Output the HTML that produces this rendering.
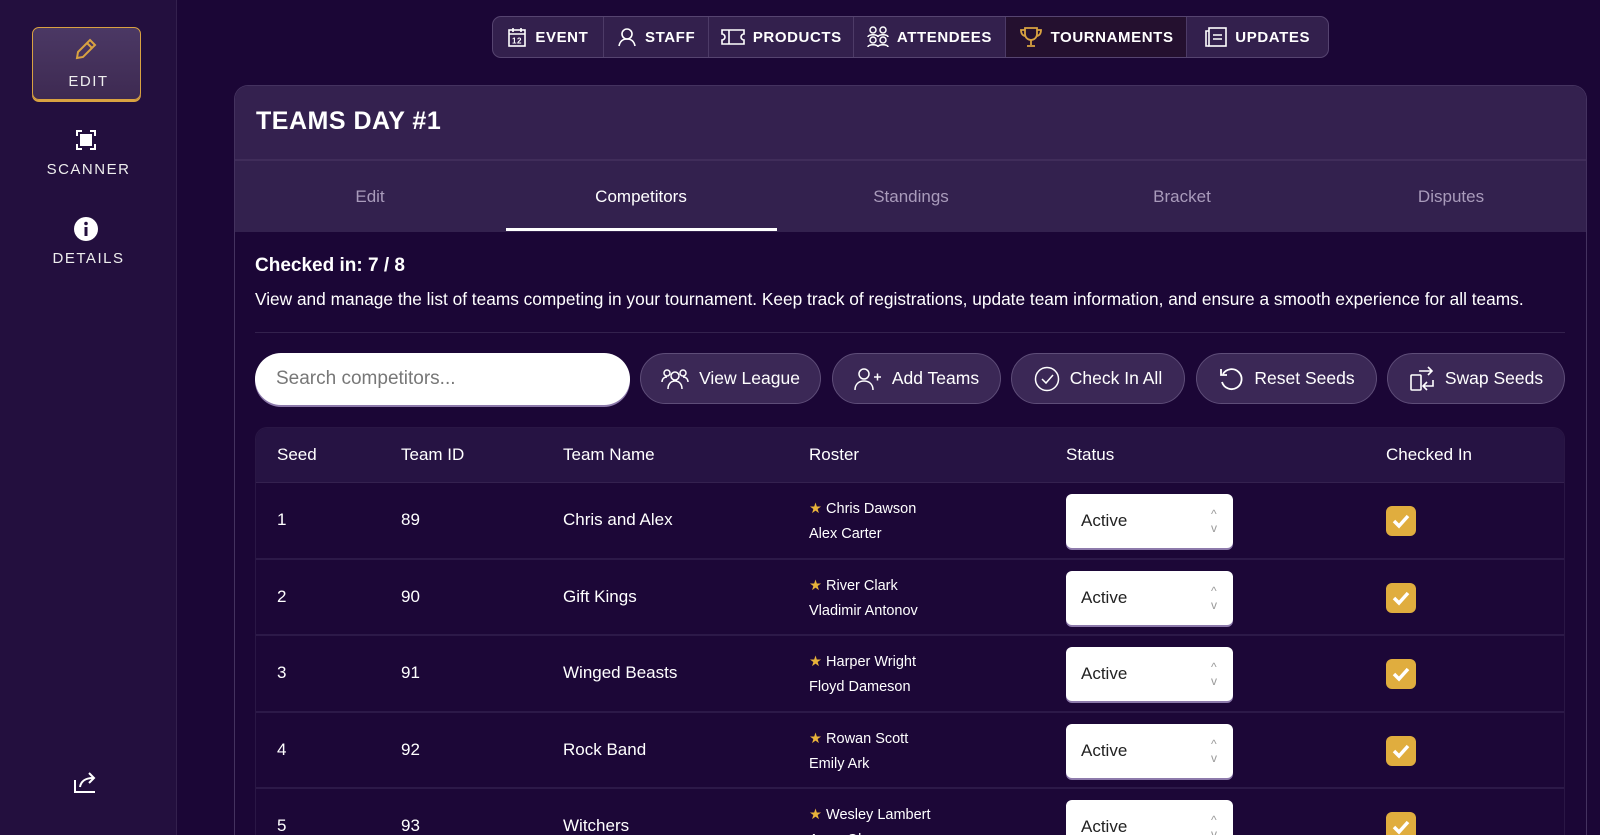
<!DOCTYPE html>
<html style="width:1600px;height:835px;overflow:hidden"><head><meta charset="utf-8"><style>
*{box-sizing:border-box;margin:0;padding:0}
body{width:1600px;height:835px;overflow:hidden;background:#1b0636;font-family:"Liberation Sans",sans-serif;color:#fff;position:relative}
.abs{position:absolute}
.side{left:0;top:0;width:177px;height:835px;background:#230f3e;border-right:1px solid #33204d}
.sitem{position:absolute;left:0;width:177px;text-align:center;font-size:15px;letter-spacing:1.5px;color:#eee}
.edit{left:32px;top:27px;width:109px;height:73px;border:1.5px solid #d9a241;border-radius:7px;background:linear-gradient(#4b3864,#3e2a52);box-shadow:0 2px 0 #d9a241}
.nav{left:492px;top:16px;width:837px;height:42px;border:1px solid #564470;border-radius:9px;background:#33204d;display:flex;overflow:hidden}
.nav div{display:flex;align-items:center;justify-content:center;gap:8px;font-weight:bold;font-size:15px;letter-spacing:.6px;border-right:1px solid #4d3b67;height:100%}
.card{left:234px;top:85px;width:1353px;height:750px;border:1px solid #44325f;border-bottom:none;border-radius:14px 14px 0 0;background:#1b0636;overflow:hidden}
.head{height:75px;background:#34214f;border-bottom:2px solid #402d5a}
.tabs{height:71px;background:#33214e;position:relative}
.tab{position:absolute;top:0;height:71px;line-height:71px;font-size:17px;color:#a99bbb;transform:translateX(-50%)}
.btn{position:absolute;top:353px;height:51px;border:1.5px solid #5e4d78;border-radius:26px;background:#3b2856;display:flex;align-items:center;justify-content:center;gap:10px;font-size:17.5px}
.tbl{left:255px;top:427px;width:1310px;height:408px;background:#1c0737;border-radius:12px 12px 0 0;overflow:hidden;border:1px solid #2a1745;border-bottom:none}
.th{height:55px;background:#261343;border-bottom:1px solid #34214f;position:relative}
.row{height:76.5px;position:relative;border-bottom:2px solid #2c1948}
.c{position:absolute;top:50%;transform:translateY(-50%);font-size:17px}
.sel{position:absolute;left:810px;top:11px;width:167px;height:54px;background:#fff;border-radius:6px;color:#222;font-size:17px;line-height:54px;padding-left:15px;box-shadow:0 2px 0 #8d7aab}
.ck{position:absolute;left:1130px;top:23px;width:30px;height:30px;border-radius:6px;background:#e0ad3e}
.ros{position:absolute;left:553px;top:14px;font-size:14.5px;line-height:25px}
</style></head><body>
<div class="abs side">
 <div class="abs edit"></div>
 <svg class="abs" style="left:74px;top:37px" width="24" height="24" viewBox="0 0 24 24" fill="none" stroke="#d9a241" stroke-width="2"><path d="M16 3l5 5L9 20l-6 1 1-6z"/><path d="M13 6l5 5"/></svg>
 <div class="sitem" style="top:73px">EDIT</div>
 <svg class="abs" style="left:74px;top:128px" width="24" height="24" viewBox="0 0 24 24" fill="none" stroke="#fff" stroke-width="2"><path d="M3 8V3h5M16 3h5v5M21 16v5h-5M8 21H3v-5"/><rect x="7" y="7" width="10" height="10" fill="#fff"/></svg>
 <div class="sitem" style="top:161px">SCANNER</div>
 <svg class="abs" style="left:73px;top:216px" width="26" height="26" viewBox="0 0 26 26"><circle cx="13" cy="13" r="12" fill="#fff"/><rect x="11.5" y="11" width="3" height="9" fill="#230f3e"/><circle cx="13" cy="7.5" r="1.8" fill="#230f3e"/></svg>
 <div class="sitem" style="top:250px">DETAILS</div>
 <svg class="abs" style="left:73px;top:770px" width="26" height="24" viewBox="0 0 26 24" fill="none" stroke="#fff" stroke-width="2"><path d="M2 10v12h20"/><path d="M7 17c1-6 6-9 13-9"/><path d="M16 3l5 5-5 5"/></svg>
</div>
<div class="abs nav">
 <div style="width:111px"><svg width="20" height="20" viewBox="0 0 20 20" fill="none" stroke="#fff" stroke-width="1.6"><rect x="2" y="3" width="16" height="16"/><path d="M2 7h16M6 1v4M14 1v4"/><text x="10" y="16.5" font-size="8" fill="#fff" stroke="none" text-anchor="middle" font-family="Liberation Sans">12</text></svg>EVENT</div>
 <div style="width:106px"><svg width="20" height="20" viewBox="0 0 20 20" fill="none" stroke="#fff" stroke-width="1.6"><circle cx="10" cy="7" r="5"/><path d="M2 19c1-5 4-7 8-7s7 2 8 7"/></svg>STAFF</div>
 <div style="width:145px"><svg width="24" height="18" viewBox="0 0 24 18" fill="none" stroke="#fff" stroke-width="1.6"><path d="M1 2h22v4a3 3 0 000 6v4H1v-4a3 3 0 000-6z"/><path d="M8 2v14"/></svg>PRODUCTS</div>
 <div style="width:152px"><svg width="22" height="22" viewBox="0 0 22 22" fill="none" stroke="#fff" stroke-width="1.5"><circle cx="6" cy="4" r="3"/><circle cx="16" cy="4" r="3"/><circle cx="6" cy="14" r="3"/><circle cx="16" cy="14" r="3"/><path d="M1 11c0-3 10-3 10 0M11 11c0-3 10-3 10 0M1 21c0-3 10-3 10 0M11 21c0-3 10-3 10 0"/></svg>ATTENDEES</div>
 <div style="width:182px;background:#24102f"><svg width="24" height="24" viewBox="0 0 24 24" fill="none" stroke="#d9a241" stroke-width="1.8"><path d="M6 3h12v6a6 6 0 01-12 0z"/><path d="M6 5H2c0 4 2 6 5 6M18 5h4c0 4-2 6-5 6M12 15v5M8 21h8"/></svg>TOURNAMENTS</div>
 <div style="width:141px;border:none"><svg width="22" height="20" viewBox="0 0 22 20" fill="none" stroke="#fff" stroke-width="1.6"><rect x="4" y="1" width="17" height="18"/><path d="M4 4H1v15h3M8 8h9M8 12h9"/></svg>UPDATES</div>
</div>
<div class="abs card">
 <div class="head"><div style="position:absolute;left:21px;top:21px;font-size:25px;font-weight:900;letter-spacing:.5px">TEAMS DAY #1</div></div>
 <div class="tabs">
  <div class="tab" style="left:135px">Edit</div>
  <div class="tab" style="left:406px;color:#fff">Competitors</div>
  <div class="tab" style="left:676px">Standings</div>
  <div class="tab" style="left:947px">Bracket</div>
  <div class="tab" style="left:1216px">Disputes</div>
  <div style="position:absolute;left:271px;top:67px;width:271px;height:3px;background:#fff"></div>
 </div>
</div>
<div class="abs" style="left:255px;top:255px;font-size:19px;font-weight:bold">Checked in: 7 / 8</div>
<div class="abs" style="left:255px;top:289px;font-size:17.3px;white-space:nowrap">View and manage the list of teams competing in your tournament. Keep track of registrations, update team information, and ensure a smooth experience for all teams.</div>
<div class="abs" style="left:255px;top:332px;width:1310px;height:1px;background:#33214d"></div>
<div class="abs" style="left:255px;top:353px;width:375px;height:52px;background:#fff;border-radius:26px;color:#777;font-size:19px;line-height:52px;padding-left:21px;box-shadow:0 2px 0 #8d7aab">Search competitors...</div>
<div class="btn" style="left:640px;width:181px"><svg width="28" height="22" viewBox="0 0 28 22" fill="none" stroke="#fff" stroke-width="1.5"><circle cx="14" cy="8" r="4"/><circle cx="6" cy="5" r="3"/><circle cx="22" cy="5" r="3"/><path d="M7 21c0-5 3-8 7-8s7 3 7 8M1 14c0-3 2-5 5-5M27 14c0-3-2-5-5-5"/></svg>View League</div>
<div class="btn" style="left:832px;width:169px"><svg width="28" height="24" viewBox="0 0 28 24" fill="none" stroke="#fff" stroke-width="1.5"><circle cx="10" cy="7" r="5"/><path d="M1 23c0-6 4-9 9-9s9 3 9 9M20 10h7M23.5 6.5v7"/></svg>Add Teams</div>
<div class="btn" style="left:1011px;width:174px"><svg width="26" height="26" viewBox="0 0 26 26" fill="none" stroke="#fff" stroke-width="1.5"><circle cx="13" cy="13" r="11.5"/><path d="M8 13l4 4 7-8"/></svg>Check In All</div>
<div class="btn" style="left:1196px;width:181px"><svg width="26" height="26" viewBox="0 0 26 26" fill="none" stroke="#fff" stroke-width="1.8"><path d="M5 8a10 10 0 11-1 8"/><path d="M3 3v6h6"/></svg>Reset Seeds</div>
<div class="btn" style="left:1387px;width:178px"><svg width="26" height="26" viewBox="0 0 26 26" fill="none" stroke="#fff" stroke-width="1.6"><rect x="2" y="9" width="10" height="15" rx="1"/><path d="M10 5h13M19 1l4 4-4 4M24 14v6H14M18 16l-4 4 4 4"/></svg>Swap Seeds</div>
<div class="abs tbl">
 <div class="th">
  <div class="c" style="left:21px">Seed</div><div class="c" style="left:145px">Team ID</div><div class="c" style="left:307px">Team Name</div><div class="c" style="left:553px">Roster</div><div class="c" style="left:810px">Status</div><div class="c" style="left:1130px">Checked In</div>
 </div>
 <div class="row"><div class="c" style="left:21px">1</div><div class="c" style="left:145px">89</div><div class="c" style="left:307px">Chris and Alex</div><div class="ros"><span style="color:#e8b23a">★</span> Chris Dawson<br>Alex Carter</div><div class="sel">Active<span style="position:absolute;right:16px;top:0;color:#999;font-size:12px;line-height:14px;padding-top:13px">^<br>v</span></div><div class="ck"><svg width="30" height="30" viewBox="0 0 30 30"><path d="M8 15l5 5 9-10" fill="none" stroke="#fff" stroke-width="3.5"/></svg></div></div>
 <div class="row"><div class="c" style="left:21px">2</div><div class="c" style="left:145px">90</div><div class="c" style="left:307px">Gift Kings</div><div class="ros"><span style="color:#e8b23a">★</span> River Clark<br>Vladimir Antonov</div><div class="sel">Active<span style="position:absolute;right:16px;top:0;color:#999;font-size:12px;line-height:14px;padding-top:13px">^<br>v</span></div><div class="ck"><svg width="30" height="30" viewBox="0 0 30 30"><path d="M8 15l5 5 9-10" fill="none" stroke="#fff" stroke-width="3.5"/></svg></div></div>
 <div class="row"><div class="c" style="left:21px">3</div><div class="c" style="left:145px">91</div><div class="c" style="left:307px">Winged Beasts</div><div class="ros"><span style="color:#e8b23a">★</span> Harper Wright<br>Floyd Dameson</div><div class="sel">Active<span style="position:absolute;right:16px;top:0;color:#999;font-size:12px;line-height:14px;padding-top:13px">^<br>v</span></div><div class="ck"><svg width="30" height="30" viewBox="0 0 30 30"><path d="M8 15l5 5 9-10" fill="none" stroke="#fff" stroke-width="3.5"/></svg></div></div>
 <div class="row"><div class="c" style="left:21px">4</div><div class="c" style="left:145px">92</div><div class="c" style="left:307px">Rock Band</div><div class="ros"><span style="color:#e8b23a">★</span> Rowan Scott<br>Emily Ark</div><div class="sel">Active<span style="position:absolute;right:16px;top:0;color:#999;font-size:12px;line-height:14px;padding-top:13px">^<br>v</span></div><div class="ck"><svg width="30" height="30" viewBox="0 0 30 30"><path d="M8 15l5 5 9-10" fill="none" stroke="#fff" stroke-width="3.5"/></svg></div></div>
 <div class="row"><div class="c" style="left:21px">5</div><div class="c" style="left:145px">93</div><div class="c" style="left:307px">Witchers</div><div class="ros"><span style="color:#e8b23a">★</span> Wesley Lambert<br>Anna Oleson</div><div class="sel">Active<span style="position:absolute;right:16px;top:0;color:#999;font-size:12px;line-height:14px;padding-top:13px">^<br>v</span></div><div class="ck"><svg width="30" height="30" viewBox="0 0 30 30"><path d="M8 15l5 5 9-10" fill="none" stroke="#fff" stroke-width="3.5"/></svg></div></div>
</div>
</body></html>
